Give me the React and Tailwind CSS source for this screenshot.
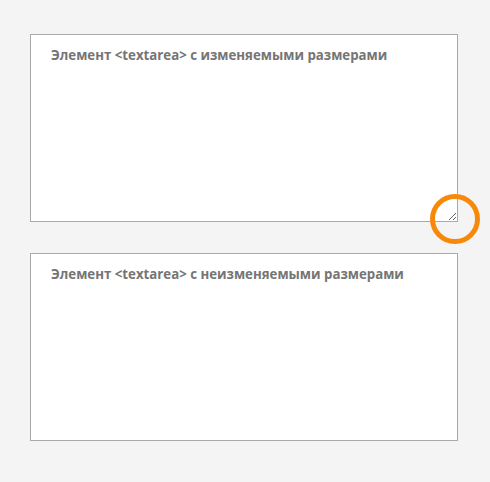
export default function App() {
  return (
    <div className="min-h-[482px] bg-[#f4f4f4] pt-[34px] px-[30px]" style={{ fontFamily: '"Open Sans", "Noto Sans", sans-serif' }}>
      <div className="relative w-[428px]">
        <textarea
          className="block w-[428px] h-[188px] bg-white border border-[#a9a9a9] px-[20px] py-[11px] text-[13.25px] font-bold text-[#555] placeholder:text-[#757575] outline-none resize"
          placeholder="Элемент <textarea> с изменяемыми размерами"
        />
        <div className="absolute -right-[22px] -bottom-[22px] w-[50px] h-[50px] rounded-full border-[5px] border-[#f7890a] pointer-events-none" />
      </div>
      <textarea
        className="block mt-[31px] w-[428px] h-[188px] bg-white border border-[#a9a9a9] px-[20px] py-[11px] text-[13.25px] font-bold text-[#555] placeholder:text-[#757575] outline-none resize-none"
        placeholder="Элемент <textarea> с неизменяемыми размерами"
      />
    </div>
  );
}
